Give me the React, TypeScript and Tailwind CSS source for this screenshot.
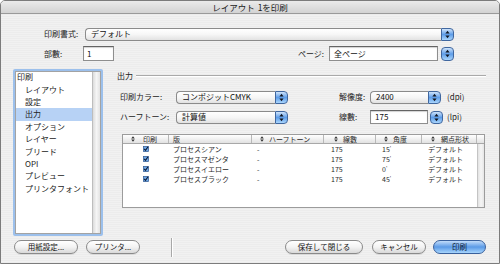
import React from "react";

function Arrows() {
  return (
    <svg width="5" height="9" viewBox="0 0 5 9">
      <path d="M2.5 0.8 L4.6 3.4 L0.4 3.4 Z" fill="#10151f" />
      <path d="M2.5 8.2 L4.6 5.6 L0.4 5.6 Z" fill="#10151f" />
    </svg>
  );
}

function BlueBtn({ className }: { className: string }) {
  return (
    <div
      className={`flex items-center justify-center border border-[#40679f] bg-linear-to-b from-[#cfe4fb] via-[#5e9de8] to-[#a9d5fc] ${className}`}
    >
      <Arrows />
    </div>
  );
}

function Popup({ className, text }: { className: string; text: string }) {
  return (
    <div className={`flex h-[13px] ${className}`}>
      <div className="flex-1 flex items-center rounded-l-[4px] border border-r-0 border-[#8b8b8b] bg-linear-to-b from-white via-[#f6f6f6] to-[#e2e2e2] pl-[5px] text-[8px] leading-none text-[#111]">
        {text}
      </div>
      <BlueBtn className="w-[13px] h-full rounded-r-[4px]" />
    </div>
  );
}

function Input({ className, text }: { className: string; text: string }) {
  return (
    <div
      className={`flex items-center border border-[#8e8e8e] border-t-[#646464] bg-white text-[8px] leading-none text-[#111] shadow-[inset_0_1px_1px_rgba(0,0,0,0.18)] ${className}`}
    >
      {text}
    </div>
  );
}

function Sort() {
  return (
    <svg width="4" height="6" viewBox="0 0 4 6" className="shrink-0">
      <path d="M2 0.2 L3.8 2.4 L0.2 2.4 Z M2 5.8 L3.8 3.6 L0.2 3.6 Z" fill="#333" />
    </svg>
  );
}

function Check() {
  return (
    <svg width="6" height="6" viewBox="0 0 6 6">
      <rect x="0.4" y="0.4" width="5.2" height="5.2" fill="#6ea9e8" stroke="#32588f" strokeWidth="0.7" />
      <path d="M1.2 2.9 L2.5 4.4 L5 0.7" stroke="#0c1933" strokeWidth="1.1" fill="none" />
    </svg>
  );
}

function AquaBtn({ className, text }: { className: string; text: string }) {
  return (
    <div
      className={`flex h-[14px] items-center justify-center rounded-full border border-[#8a8a8a] bg-linear-to-b from-white via-[#f3f3f3] to-[#d9d9d9] text-[7.5px] leading-none text-[#111] shadow-[0_1px_0_rgba(0,0,0,0.08)] ${className}`}
    >
      {text}
    </div>
  );
}

const listItems = [
  "レイアウト",
  "設定",
  "出力",
  "オプション",
  "レイヤー",
  "ブリード",
  "OPI",
  "プレビュー",
  "プリンタフォント",
];

const rows = [
  ["プロセスシアン", "175", "15"],
  ["プロセスマゼンタ", "175", "75"],
  ["プロセスイエロー", "175", "0"],
  ["プロセスブラック", "175", "45"],
];

export default function App() {
  return (
    <div className="w-[500px] h-[267px] bg-white font-['Noto_Sans_CJK_JP',sans-serif] text-[#222]">
      <div className="w-[500px] h-[264px] flex flex-col overflow-hidden rounded-t-[5px] border border-[#7c7c7c] bg-[repeating-linear-gradient(0deg,#ececec_0px,#ececec_1px,#f1f1f1_1px,#f1f1f1_2px)]">
        {/* title bar */}
        <div className="h-[13px] shrink-0 flex items-center justify-center border-b border-[#9a9a9a] bg-linear-to-b from-[#ebebeb] to-[#d3d3d3] text-[8.5px] leading-none text-[#1a1a1a]">
          <span>レイアウト</span>
          <span className="ml-[3px]">1を印刷</span>
        </div>

        {/* row 1 */}
        <div className="mt-[13px] h-[14px] flex items-center">
          <div className="ml-[43px] w-[41px] text-[8px] leading-none">印刷書式:</div>
          <Popup className="w-[369px]" text="デフォルト" />
        </div>

        {/* row 2 */}
        <div className="mt-[5px] h-[15px] flex items-center">
          <div className="ml-[43px] w-[39px] text-[8px] leading-none">部數:</div>
          <Input className="w-[31px] h-[15px] pl-[3px]" text="1" />
          <div className="ml-[184px] w-[31px] text-[8px] leading-none">ページ:</div>
          <Input className="w-[109px] h-[15px] pl-[4px]" text="全ページ" />
          <BlueBtn className="ml-[3px] w-[13px] h-[14px] rounded-[4px]" />
        </div>

        {/* main */}
        <div className="mt-[8px] h-[167px] flex">
          {/* list */}
          <div className="ml-[12px] w-[90px] h-[167px] flex rounded-[2px] border-2 border-[#9cc0ec]">
            <div className="flex-1 flex border border-[#a3a3a3] bg-white">
              <div className="flex-1 flex flex-col overflow-hidden text-[8px] leading-none">
                <div className="-mt-[1px] h-[12.4px] shrink-0 flex items-center pl-[1px]">印刷</div>
                {listItems.map((t) => (
                  <div
                    key={t}
                    className={`h-[12.4px] shrink-0 flex items-center pl-[9px] ${
                      t === "出力" ? "bg-[#b7d2f5]" : ""
                    }`}
                  >
                    {t}
                  </div>
                ))}
              </div>
              <div className="w-[8px] border-l border-[#bdbdbd] bg-linear-to-r from-[#dcdcdc] via-[#f5f5f5] to-[#e3e3e3]" />
            </div>
          </div>

          {/* right panel */}
          <div className="ml-[14px] w-[371px] flex flex-col">
            <div className="h-[14px] flex items-center text-[8px] leading-none">
              <span>出力</span>
              <div className="ml-[3px] mr-[2px] flex-1 h-[2px] border-t border-[#a9a9a9] border-b border-b-white" />
            </div>

            <div className="mt-[7px] h-[14px] flex items-center text-[8px] leading-none">
              <div className="ml-[3px] w-[56px]">印刷カラー:</div>
              <Popup className="w-[112px]" text="コンポジットCMYK" />
              <div className="ml-[51px] w-[31px]">解像度:</div>
              <Popup className="w-[71px]" text="2400" />
              <div className="ml-[6px]">(dpi)</div>
            </div>

            <div className="mt-[6px] h-[14px] flex items-center text-[8px] leading-none">
              <div className="ml-[3px] w-[56px] whitespace-nowrap">ハーフトーン:</div>
              <Popup className="w-[112px]" text="計算値" />
              <div className="ml-[51px] w-[31px]">線數:</div>
              <Input className="w-[58px] h-[14px] pl-[4px]" text="175" />
              <BlueBtn className="ml-[2px] w-[13px] h-[13px] rounded-[4px]" />
              <div className="ml-[4px]">(lpi)</div>
            </div>

            {/* table */}
            <div className="ml-[5px] mt-[10px] w-[363px] h-[74px] flex flex-col border border-[#9c9c9c] bg-white text-[7px] leading-none text-[#2a2a2a]">
              <div className="h-[9px] shrink-0 flex border-b border-[#a8a8a8] bg-linear-to-b from-white to-[#e2e2e2]">
                <div className="w-[46px] flex items-center gap-[8px] border-r border-[#b8b8b8] pl-[8px]">
                  <Sort />
                  印刷
                </div>
                <div className="w-[83px] flex items-center border-r border-[#b8b8b8] pl-[4px]">版</div>
                <div className="w-[72px] flex items-center gap-[5px] border-r border-[#b8b8b8] pl-[8px] whitespace-nowrap">
                  <Sort />
                  ハーフトーン
                </div>
                <div className="w-[52px] flex items-center gap-[5px] border-r border-[#b8b8b8] pl-[10px]">
                  <Sort />
                  線數
                </div>
                <div className="w-[46px] flex items-center gap-[5px] border-r border-[#b8b8b8] pl-[8px]">
                  <Sort />
                  角度
                </div>
                <div className="w-[55px] flex items-center gap-[6px] border-r border-[#b8b8b8] pl-[9px] whitespace-nowrap">
                  <Sort />
                  網点形状
                </div>
                <div className="flex-1" />
              </div>
              <div className="flex-1 flex">
                <div className="flex-1 flex flex-col">
                  {rows.map((r) => (
                    <div key={r[0]} className="h-[10px] flex items-center">
                      <div className="w-[46px] flex justify-center">
                        <Check />
                      </div>
                      <div className="w-[83px] pl-[4px] whitespace-nowrap">{r[0]}</div>
                      <div className="w-[72px] pl-[5px]">-</div>
                      <div className="w-[52px] pl-[7px]">{r[1]}</div>
                      <div className="w-[46px] pl-[6px] flex items-start">
                        <span>{r[2]}</span>
                        <span className="text-[5px] -mt-[1px]">'</span>
                      </div>
                      <div className="w-[55px] pl-[6px] whitespace-nowrap">デフォルト</div>
                    </div>
                  ))}
                </div>
                <div className="w-[7px] border-l border-[#c4c4c4] bg-linear-to-r from-[#e2e2e2] via-[#f6f6f6] to-[#e6e6e6]" />
              </div>
            </div>
          </div>
        </div>

        {/* bottom buttons */}
        <div className="mt-[4px] h-[14px] flex items-center">
          <AquaBtn className="ml-[13px] w-[64px]" text="用紙設定..." />
          <AquaBtn className="ml-[8px] w-[54px]" text="プリンタ..." />
          <div className="ml-[31px] w-[1px] h-[19px] bg-[#a8a8a8] shadow-[1px_0_0_#fff]" />
          <AquaBtn className="ml-[113px] w-[78px]" text="保存して閉じる" />
          <AquaBtn className="ml-[9px] w-[54px]" text="キャンセル" />
          <div className="ml-[7px] w-[53px] h-[14px] flex items-center justify-center rounded-full border border-[#39609c] bg-linear-to-b from-[#c2dcf9] via-[#5b9ae6] to-[#a7d5fc] text-[7.5px] leading-none text-[#0b1a33]">
            印刷
          </div>
        </div>
      </div>
    </div>
  );
}
